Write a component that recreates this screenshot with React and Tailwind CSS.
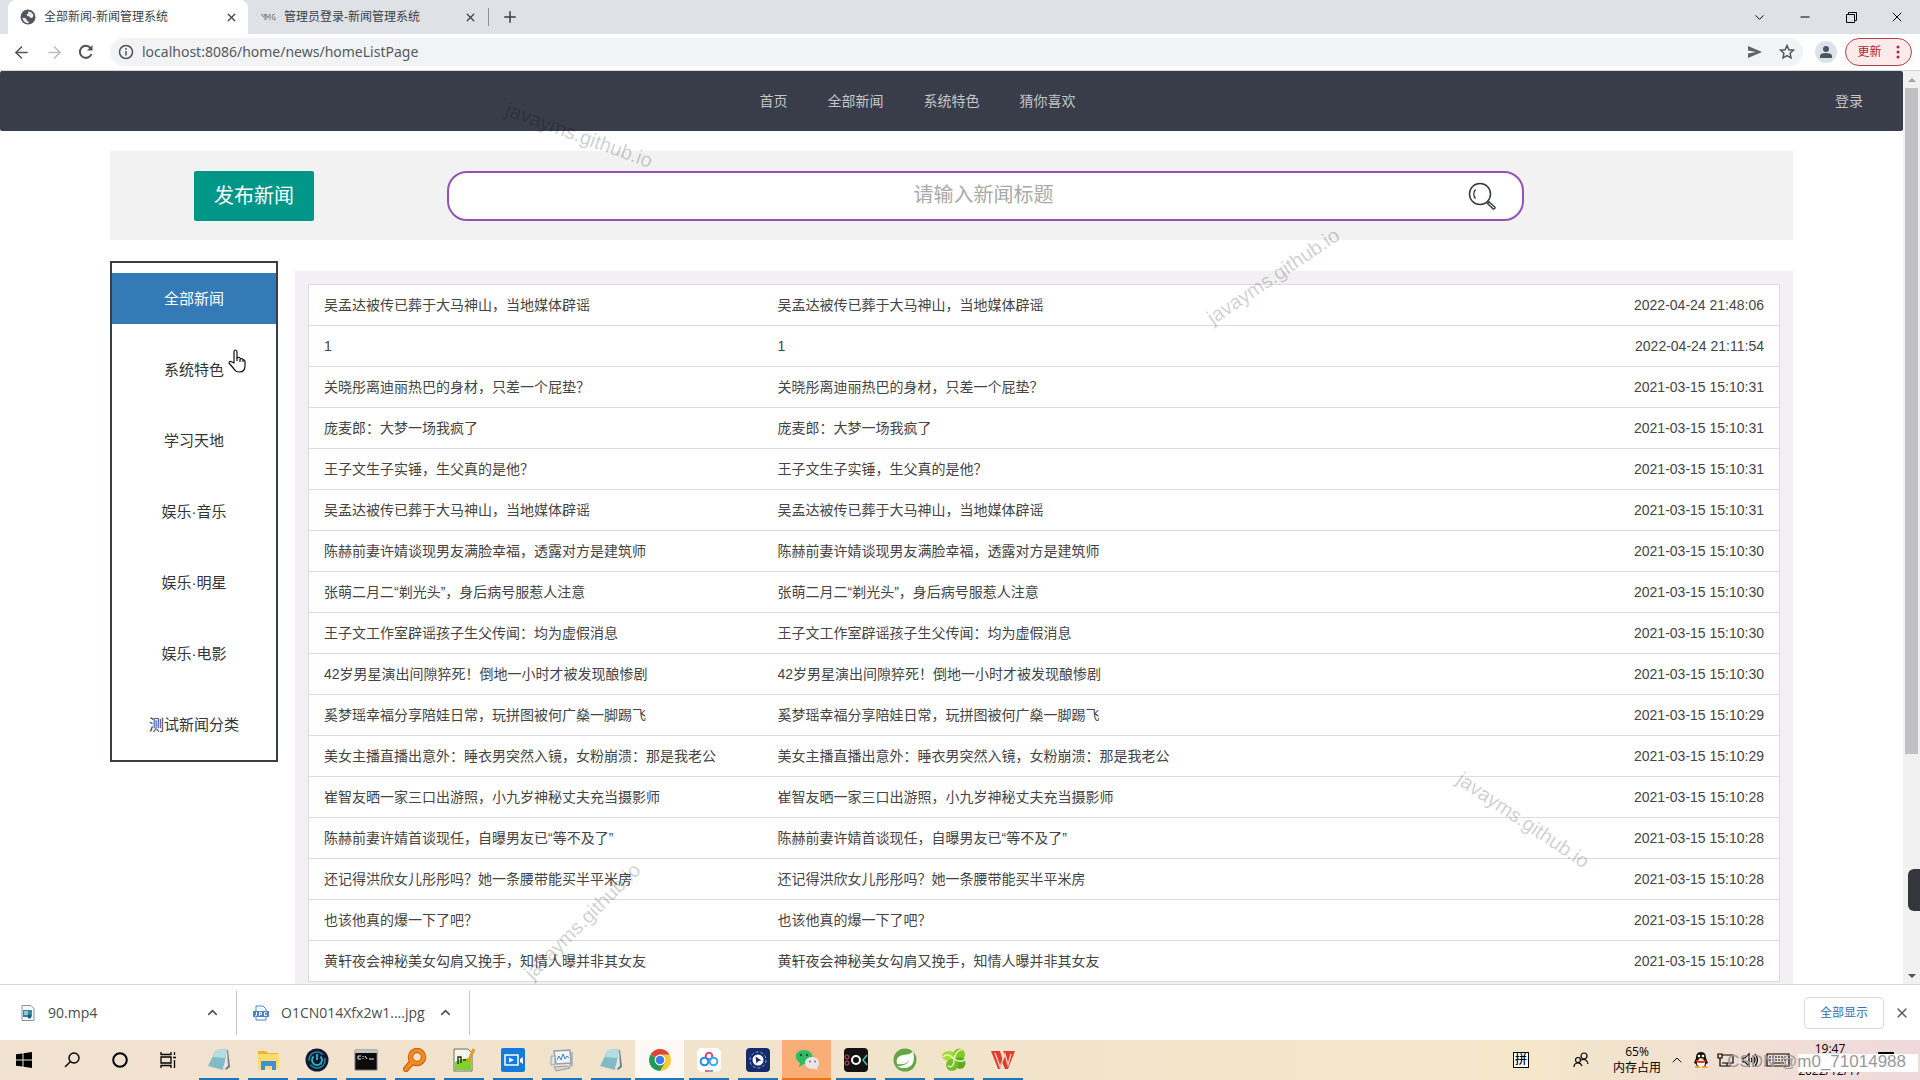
import { ArrowLeft, ArrowRight, ChevronDown, ChevronUp, Minus, Plus, X } from 'lucide-react';

const NEWS = [
  ['吴孟达被传已葬于大马神山，当地媒体辟谣', '2022-04-24 21:48:06'],
  ['1', '2022-04-24 21:11:54'],
  ['关晓彤离迪丽热巴的身材，只差一个屁垫？', '2021-03-15 15:10:31'],
  ['庞麦郎：大梦一场我疯了', '2021-03-15 15:10:31'],
  ['王子文生子实锤，生父真的是他？', '2021-03-15 15:10:31'],
  ['吴孟达被传已葬于大马神山，当地媒体辟谣', '2021-03-15 15:10:31'],
  ['陈赫前妻许婧谈现男友满脸幸福，透露对方是建筑师', '2021-03-15 15:10:30'],
  ['张萌二月二“剃光头”，身后病号服惹人注意', '2021-03-15 15:10:30'],
  ['王子文工作室辟谣孩子生父传闻：均为虚假消息', '2021-03-15 15:10:30'],
  ['42岁男星演出间隙猝死！倒地一小时才被发现酿惨剧', '2021-03-15 15:10:30'],
  ['奚梦瑶幸福分享陪娃日常，玩拼图被何广燊一脚踢飞', '2021-03-15 15:10:29'],
  ['美女主播直播出意外：睡衣男突然入镜，女粉崩溃：那是我老公', '2021-03-15 15:10:29'],
  ['崔智友晒一家三口出游照，小九岁神秘丈夫充当摄影师', '2021-03-15 15:10:28'],
  ['陈赫前妻许婧首谈现任，自曝男友已“等不及了”', '2021-03-15 15:10:28'],
  ['还记得洪欣女儿彤彤吗？她一条腰带能买半平米房', '2021-03-15 15:10:28'],
  ['也该他真的爆一下了吧？', '2021-03-15 15:10:28'],
  ['黄轩夜会神秘美女勾肩又挽手，知情人曝并非其女友', '2021-03-15 15:10:28'],
];

const NAV = ['首页', '全部新闻', '系统特色', '猜你喜欢'];
const CATEGORIES = ['全部新闻', '系统特色', '学习天地', '娱乐·音乐', '娱乐·明星', '娱乐·电影', '测试新闻分类'];

function TabStrip() {
  return (
    <div className="flex h-[34px] shrink-0 items-stretch bg-[#dee1e6] pl-2 text-xs text-[#3c4043]">
      <div className="flex w-60 items-center rounded-t-lg bg-white pr-2.5 pl-3">
        <svg viewBox="0 0 16 16" className="size-4 shrink-0">
          <circle cx="8" cy="8" r="7.5" fill="#50565c" />
          <path d="M2.500 9q3-1 4 1.500T9.500 13q-1 1.500-3 1-3.500-1.500-4-5z" fill="#e8eaed" />
          <path d="M8 2.500q4 0 5.500 4-.5 3-3 2.500-1-2-3-2-1.500-1-.5-2 2 0 1-2.500z" fill="#e8eaed" />
        </svg>
        <span className="ml-2 flex-1">全部新闻-新闻管理系统</span>
        <button aria-label="关闭标签页"><X size={13} strokeWidth={2.4} /></button>
      </div>
      <div className="flex w-60 items-center border-r border-transparent pr-2.5 pl-3">
        <svg viewBox="0 0 16 10" className="h-2.5 w-4 shrink-0" fill="none" stroke="#85898d">
          <path d="M1 3q2-2 2 1t2-2v6M6 8V2l2 4 2-4v6M15 2q-3 0-3 3t3 3v-3h-1.500" />
        </svg>
        <span className="ml-2 flex-1">管理员登录-新闻管理系统</span>
        <button aria-label="关闭标签页"><X size={13} strokeWidth={2.4} /></button>
      </div>
      <div className="my-2 border-l border-[#8d9197]" />
      <button className="ml-3" aria-label="新标签页"><Plus size={18} /></button>
      <div className="ml-auto flex items-center text-black">
        <button className="flex w-[46px] justify-center" aria-label="搜索标签页"><ChevronDown size={15} strokeWidth={1.5} /></button>
        <button className="flex w-[46px] justify-center" aria-label="最小化"><Minus size={14} strokeWidth={1.8} /></button>
        <button className="flex w-[46px] justify-center" aria-label="还原">
          <svg viewBox="0 0 11 11" className="size-[11px]" fill="none" stroke="currentColor">
            <path d="M.5 2.5h8v8h-8zM2.5 2.5v-2h8v8h-2" />
          </svg>
        </button>
        <button className="flex w-[46px] justify-center" aria-label="关闭"><X size={16} strokeWidth={1.5} /></button>
      </div>
    </div>
  );
}

function Toolbar() {
  return (
    <div className="flex h-[37px] shrink-0 items-center border-b border-[#d5d7da] bg-white pr-2 pl-3 text-[#50545a]">
      <button className="mr-3.5" aria-label="后退"><ArrowLeft size={19} /></button>
      <button className="mr-3.5 text-[#b9bcc0]" aria-label="前进"><ArrowRight size={19} /></button>
      <button className="mr-4" aria-label="重新加载">
        <svg viewBox="0 0 16 16" className="size-4" fill="none" stroke="currentColor" strokeWidth="2">
          <path d="M13.500 10A6 6 0 1 1 12.500 4" />
          <path d="M14.500 1v5.500H9z" fill="currentColor" stroke="none" />
        </svg>
      </button>
      <div className="flex h-7 flex-1 items-center rounded-full bg-[#f1f3f4] pr-2 pl-2">
        <svg viewBox="0 0 16 16" className="size-4" fill="none" stroke="currentColor" strokeWidth="1.5">
          <circle cx="8" cy="8" r="6.500" />
          <path d="M8 7v4.500M8 4v1.700" />
        </svg>
        <input
          aria-label="地址"
          className="ml-2 flex-1 bg-transparent font-['Noto_Sans','Noto_Sans_CJK_SC',sans-serif] text-sm text-[#55595e] outline-none"
          defaultValue="localhost:8086/home/news/homeListPage"
        />
        <button className="mr-4" aria-label="分享">
          <svg viewBox="0 0 16 14" className="h-3.5 w-4" fill="#5f6368"><path d="M1 1l14 6-14 6V8.500L9 7 1 5.500z" /></svg>
        </button>
        <button aria-label="收藏">
          <svg viewBox="0 0 16 16" className="size-4" fill="none" stroke="#50545a" strokeWidth="1.500">
            <path d="M8 1.500l1.900 4.200 4.600.5-3.400 3.100.9 4.500L8 11.500l-4 2.300.9-4.500L1.500 6.200l4.600-.5z" />
          </svg>
        </button>
      </div>
      <button className="ml-3 flex size-[22px] items-center justify-center rounded-full bg-[#dde1ea]" aria-label="个人资料">
        <svg viewBox="0 0 14 14" className="size-3.5" fill="#4c5462">
          <circle cx="7" cy="4" r="3" />
          <path d="M1 13v-2q0-3 6-3t6 3v2z" />
        </svg>
      </button>
      <button className="ml-2 flex h-7 w-[67px] items-center justify-center gap-3.5 rounded-full border border-[#b3404a] bg-[#fcebea] text-xs text-[#b3262f]">
        更新
        <svg viewBox="0 0 4 14" className="h-3.5 w-1" fill="#b3262f">
          <circle cx="2" cy="2" r="1.500" /><circle cx="2" cy="7" r="1.500" /><circle cx="2" cy="12" r="1.500" />
        </svg>
      </button>
    </div>
  );
}

function SiteNav() {
  return (
    <nav className="flex h-[60px] items-center rounded-[2px] bg-[#393d49] px-5 text-sm text-[#c3c5c9]">
      <div className="flex flex-1 justify-center">
        {NAV.map(name => <a key={name} href="#" className="px-5">{name}</a>)}
      </div>
      <a href="#" className="px-5">登录</a>
    </nav>
  );
}

function SearchPanel() {
  return (
    <div className="mt-5 flex items-center bg-[#f2f2f2] pt-5 pb-[19px] pl-[84px]">
      <button className="h-[50px] w-[120px] rounded-[2px] bg-[#009688] text-xl text-white">发布新闻</button>
      <div className="mr-[269px] ml-[133px] flex h-[50px] flex-1 items-center rounded-[20px] border-2 border-[#9453b4] bg-white pr-[26px] pl-[50px]">
        <input
          aria-label="新闻标题"
          placeholder="请输入新闻标题"
          className="min-w-0 flex-1 bg-transparent pb-0.5 text-center text-xl outline-none placeholder:text-[#a9a9a9]"
        />
        <button aria-label="搜索">
          <svg viewBox="0 0 28 28" className="size-7" fill="none" stroke="#353940" strokeWidth="1.500">
            <circle cx="12" cy="12" r="10.500" />
            <path d="M7.500 7.500a7 7 0 0 0 0 9M19.500 21.500l1.500-1.700 6 5.500q.2 1.700-1.700 1.700z" />
          </svg>
        </button>
      </div>
    </div>
  );
}

function Sidebar() {
  return (
    <aside className="flex w-[168px] shrink-0 flex-col gap-5 border-2 border-[#3a3d45] pt-2.5 pb-2.5 text-[15px] text-[#333]">
      {CATEGORIES.map((name, i) => (
        <a
          key={name}
          href="#"
          className={`flex h-[51px] items-center justify-center pt-0.5 ${i === 0 ? 'bg-[#337ab7] text-white' : ''}`}
        >
          {name}
        </a>
      ))}
    </aside>
  );
}

function NewsTable() {
  return (
    <div className="mt-2.5 flex-1 bg-[#f2f0f2] p-[13px]">
      <table className="w-full border-collapse border border-[#dcdcdf] bg-white text-sm text-[#444]">
        <tbody>
          {NEWS.map(([title, time], i) => (
            <tr key={i} className="h-[41px] border-b border-[#dcdcdf]">
              <td className="w-[454px] px-[15px]">{title}</td>
              <td className="px-[15px]">{title}</td>
              <td className="px-[15px] text-right">{time}</td>
            </tr>
          ))}
        </tbody>
      </table>
    </div>
  );
}

function Scrollbar() {
  return (
    <div className="flex w-[17px] shrink-0 flex-col items-center justify-between bg-[#f1f1f2]">
      <svg viewBox="0 0 17 17" className="size-[17px]"><path d="M5 11h8L9 7z" fill="#a3a3a3" /></svg>
      <div className="mb-auto h-[73%] w-[13px] bg-[#c1c1c3]" />
      <svg viewBox="0 0 17 17" className="size-[17px]"><path d="M5 7h8l-4 4z" fill="#505050" /></svg>
    </div>
  );
}

function Downloads() {
  return (
    <div className="flex h-14 shrink-0 items-center border-t border-[#d5d7da] bg-white pr-2.5 font-['Open_Sans','Noto_Sans_CJK_SC',sans-serif] text-sm text-[#4a4d51]">
      <div className="flex h-11 w-[237px] items-center border-r border-[#c5c7ca] pr-4 pl-5">
        <svg viewBox="0 0 16 16" className="size-4">
          <path d="M2 .5h9l3 3v12H2z" fill="#f4f8fa" stroke="#8b9298" />
          <path d="M3 5h7v7H3z" fill="#2c87a8" />
          <path d="M4 7h4M4 9h4" stroke="#fff" />
          <path d="M11 5v6" stroke="#155e80" strokeWidth="1.500" />
          <circle cx="9.500" cy="11.500" r="2" fill="#155e80" />
        </svg>
        <span className="ml-3 flex-1">90.mp4</span>
        <button aria-label="90.mp4 选项"><ChevronUp size={15} strokeWidth={2.4} /></button>
      </div>
      <div className="flex h-11 w-[233px] items-center border-r border-[#c5c7ca] pr-4 pl-4">
        <svg viewBox="0 0 16 16" className="size-4">
          <path d="M3 6V1h7l3 3v2M3 12v3h10v-3" fill="#fff" stroke="#4f82c9" />
          <path d="M0 6h16v6H0z" fill="#4f82c9" />
          <path d="M3.500 7v3q0 1-1.500 1M6.500 11V7.500h2v2h-2M13.500 7.500h-2v3h2V9.500" stroke="#fff" fill="none" />
        </svg>
        <span className="ml-3 flex-1">O1CN014Xfx2w1....jpg</span>
        <button aria-label="jpg 选项"><ChevronUp size={15} strokeWidth={2.4} /></button>
      </div>
      <button className="ml-auto h-8 w-20 rounded border border-[#d7d9dc] text-xs text-[#3271b5]">全部显示</button>
      <button className="ml-2.5 text-[#55585c]" aria-label="关闭下载栏"><X size={16} /></button>
    </div>
  );
}

function Notepad() {
  return (
    <>
      <path d="M9 2h12l2 17-4 3z" fill="#6f7b80" />
      <path d="M9 2l11-1-4 21-15-4z" fill="#7fbcc8" />
      <path d="M9 2l11-1-2 9-12-1z" fill="#b5dde2" />
      <path d="M16 22l4-21 1 17z" fill="#e4e7e5" />
    </>
  );
}

const APPS = [
  { name: '记事本', art: <Notepad /> },
  {
    name: '文件资源管理器',
    art: (
      <>
        <path d="M2 3h8l2 2h10v15H2z" fill="#eab530" />
        <path d="M2 6h21v15H2z" fill="#ffdb6d" />
        <path d="M5 22v-9h15v9h-4v-4H9v4z" fill="#3f8fd6" />
      </>
    ),
  },
  {
    name: '安全中心',
    art: (
      <>
        <circle cx="12" cy="12" r="11.500" fill="#10192f" />
        <circle cx="12" cy="12" r="8" fill="none" stroke="#1b8ba3" strokeWidth="1.500" strokeDasharray="20 4" />
        <path d="M12 6v6M8.500 8.500a5 5 0 1 0 7 0" fill="none" stroke="#28b9cc" strokeWidth="1.800" />
      </>
    ),
  },
  {
    name: '命令提示符',
    art: (
      <>
        <path d="M1 2h22v20H1z" fill="#0b0b0b" stroke="#777" />
        <path d="M1 2h22v3H1z" fill="#bfc3c6" />
        <path d="M7 8H4v3h3M9 8v1M9 10v1M11 8l2 3M15 11h5" stroke="#eee" fill="none" />
      </>
    ),
  },
  {
    name: '搜索工具',
    art: (
      <>
        <circle cx="14" cy="9" r="6.500" fill="none" stroke="#c55e0c" strokeWidth="5.500" />
        <path d="M9 14l-6 7" stroke="#c55e0c" strokeWidth="6" strokeLinecap="round" />
        <circle cx="14" cy="9" r="6.500" fill="none" stroke="#f68a1f" strokeWidth="3.500" />
        <path d="M9 14l-6 7" stroke="#f68a1f" strokeWidth="4" strokeLinecap="round" />
      </>
    ),
  },
  {
    name: 'Notepad++',
    art: (
      <>
        <path d="M2 1h14l4 4v18H2z" fill="#f4f6ee" stroke="#66705c" />
        <path d="M3 14q8-5 16-3v11H3z" fill="#7fd12e" />
        <path d="M6 16V9h3v6M11 12h3M15 12h3" stroke="#26351f" strokeWidth="1.500" fill="none" />
        <path d="M22 1l-6 13" stroke="#dd9e2a" strokeWidth="3" />
      </>
    ),
  },
  {
    name: '录屏',
    art: (
      <>
        <rect x="0" y="0" width="24" height="24" rx="2" fill="#147bdc" />
        <path d="M4 7h13v10H4z" fill="none" stroke="#fff" strokeWidth="1.500" />
        <path d="M8 9.500l5 2.500-5 2.500z" fill="#fff" />
        <path d="M19 11l3-2v7l-3-2z" fill="#fff" />
      </>
    ),
  },
  {
    name: '资源监视器',
    art: (
      <>
        <path d="M20 4h3v14l-4 2z" fill="#b4b8ba" />
        <path d="M4 3l16-1 1 13-15 1z" fill="#edf3f7" stroke="#98a0a6" strokeWidth="1.500" />
        <path d="M7 12l2-4 2 4 2-6 2 5 2-3 2 2" fill="none" stroke="#3b86b9" />
        <path d="M1 8h4v9H1z" fill="#dfe2e3" stroke="#a2a5a8" />
        <path d="M4 19l13-1 3 2-14 3z" fill="#d4d6d7" stroke="#979a9c" />
      </>
    ),
  },
  { name: '记事本', art: <Notepad /> },
  {
    name: 'Chrome',
    active: true,
    art: (
      <>
        <path d="M12 12L2.500 6.500A11 11 0 0 1 21.500 6.500z" fill="#dc4437" />
        <path d="M12 12V6.500h9.500A11 11 0 0 1 12 23z" fill="#fcc934" />
        <path d="M12 12l4.800 2.700L12 23A11 11 0 0 1 2.500 6.500z" fill="#1e9c55" />
        <circle cx="12" cy="12" r="5.400" fill="#fff" />
        <circle cx="12" cy="12" r="4.300" fill="#3f7ce8" />
      </>
    ),
  },
  {
    name: '百度网盘',
    art: (
      <>
        <rect width="24" height="24" rx="5" fill="#fff" />
        <circle cx="12" cy="8" r="3.300" fill="none" stroke="#e7485d" strokeWidth="2" />
        <circle cx="7.500" cy="13.500" r="3.800" fill="none" stroke="#248af0" strokeWidth="2" />
        <circle cx="16.500" cy="13.500" r="3.800" fill="none" stroke="#39aaf3" strokeWidth="2" />
        <path d="M8 23h4" stroke="#e34" strokeWidth="1.500" /><path d="M12 23h4" stroke="#38e" strokeWidth="1.500" />
      </>
    ),
  },
  {
    name: '播放器',
    art: (
      <>
        <rect width="24" height="24" rx="4" fill="#142c6d" />
        <circle cx="12" cy="12" r="8" fill="none" stroke="#8ca4d8" strokeDasharray="3 2" />
        <circle cx="12" cy="12" r="5.500" fill="#fff" />
        <path d="M9.500 8.500l6 4-3 .5-2 2.500z" fill="#142c6d" />
      </>
    ),
  },
  {
    name: '微信',
    alert: true,
    art: (
      <>
        <path d="M9 2c5 0 8.500 3 8.500 7S14 16 9 16l-5 3 1-4C-2 11 0 2 9 2z" fill="#2ebd62" />
        <path d="M17 9c4 0 7 2.500 7 6 0 2-1 3.500-2 4.500v2.500l-3-1.500c-5 1-9-1.500-9-5.500 0-3.500 3-6 7-6z" fill="#e8e8e6" />
        <circle cx="6" cy="7" r="1.200" fill="#185c33" /><circle cx="12" cy="7" r="1.200" fill="#185c33" />
        <circle cx="15" cy="13.500" r="1" fill="#777" /><circle cx="20" cy="13.500" r="1" fill="#777" />
      </>
    ),
  },
  {
    name: '剪辑',
    art: (
      <>
        <rect width="24" height="24" rx="4" fill="#121212" />
        <circle cx="12" cy="12" r="4" fill="none" stroke="#fff" strokeWidth="2" />
        <circle cx="3" cy="9" r="2" fill="none" stroke="#e84966" /><circle cx="3" cy="15" r="2" fill="none" stroke="#e84966" />
        <path d="M23 7l-4 5 4 5" fill="none" stroke="#42c7b6" strokeWidth="1.500" />
      </>
    ),
  },
  {
    name: 'Spring',
    art: (
      <>
        <circle cx="12" cy="12" r="11.500" fill="#63a744" />
        <path d="M20 3c2 8 1 16-7 17-4 .5-7-.5-9-2 6 .5 11-2 13-7-3 5-8 6-13 5C2 8 9 7 14 6.500 17 6 19 5 20 3z" fill="#fff" />
      </>
    ),
  },
  {
    name: '下载助手',
    art: (
      <>
        <ellipse cx="7" cy="8" rx="7" ry="5" fill="#a9dc38" />
        <ellipse cx="17" cy="7" rx="6" ry="6.500" fill="#81ca27" />
        <ellipse cx="18" cy="15" rx="5.500" ry="6" fill="#5cae20" />
        <ellipse cx="10" cy="17" rx="6" ry="6" fill="#74be2b" />
        <path d="M1 9q5-5 11 2Q14 2 20 2M6 18q6 3 6-7 5 4 11 1" fill="none" stroke="#e5f6b8" strokeWidth="1.500" />
      </>
    ),
  },
  {
    name: 'WPS',
    art: (
      <>
        <path d="M0 3h9l3 10 2-5-2-5h12l-7 18h-3l-3-7-2 7H7z" fill="#e23b2d" />
        <path d="M4 5l5 14 5-13 3 11 3-11" fill="none" stroke="#f7d3c6" strokeWidth="1.300" />
      </>
    ),
  },
];

function Taskbar() {
  return (
    <div className="flex h-10 shrink-0 items-stretch bg-linear-to-r from-[#f1e1cf] from-0% via-[#f3e6c9] via-80% to-[#efd9dc] to-100% text-black">
      <button className="flex w-12 items-center justify-center" aria-label="开始">
        <svg viewBox="0 0 16 16" className="size-4"><path d="M0 2.300L6.500 1.400v6.100H0zM7.500 1.200L16 0v7.500H7.500zM0 8.500h6.500v6.100L0 13.700zM7.500 8.500H16V16l-8.500-1.200z" /></svg>
      </button>
      <button className="flex w-12 items-center justify-center" aria-label="搜索">
        <svg viewBox="0 0 16 16" className="size-4" fill="none" stroke="currentColor" strokeWidth="1.400"><circle cx="10" cy="6" r="5" /><path d="M6.500 9.500L1 15" /></svg>
      </button>
      <button className="flex w-12 items-center justify-center" aria-label="Cortana">
        <svg viewBox="0 0 16 16" className="size-4" fill="none" stroke="currentColor" strokeWidth="2"><circle cx="8" cy="8" r="6.800" /></svg>
      </button>
      <button className="mr-0.5 flex w-12 items-center justify-center" aria-label="任务视图">
        <svg viewBox="0 0 17 16" className="h-4 w-[17px]" fill="none" stroke="currentColor" strokeWidth="1.300">
          <path d="M1 0v2.500h10V0M1 5h10v6H1zM1 16v-2.500h10V16M14.500 0v3M14.500 8v8M13 5.500h3" />
        </svg>
      </button>
      {APPS.map((app, i) => (
        <button
          key={i}
          aria-label={app.name}
          className={`flex w-[49px] flex-col items-center justify-between pt-2 ${app.active ? 'bg-[#fdf8f4]' : app.alert ? 'bg-[#f9ad77]' : ''}`}
        >
          <svg viewBox="0 0 24 24" className="size-6">{app.art}</svg>
          <span className={`h-0.5 ${app.active ? 'w-full bg-[#1b76bd]' : app.alert ? 'w-full bg-[#f2700f]' : 'w-10 bg-[#1b76bd]'}`} />
        </button>
      ))}
      <div className="ml-auto flex items-center pr-[26px] font-['Open_Sans','Noto_Sans_CJK_SC',sans-serif] text-xs">
        <span className="mr-11 flex size-4 items-center justify-center border border-black bg-white font-medium">拼</span>
        <svg viewBox="0 0 16 16" className="mr-6 size-4" fill="none" stroke="currentColor" strokeWidth="1.200">
          <circle cx="5" cy="8" r="2.500" /><circle cx="11" cy="4" r="3" /><path d="M1 15q0-4 4-4 3 0 4 3M8 8q6-2 7 4" />
        </svg>
        <div className="mr-2 text-center leading-4">65%<br />内存占用</div>
        <ChevronUp size={16} strokeWidth={1.5} />
        <svg viewBox="0 0 16 16" className="ml-2 size-4">
          <path d="M8 0c4 0 5 3 5 6l2 5-2 1-1 3H4l-1-3-2-1 2-5c0-3 1-6 5-6z" fill="#111" />
          <ellipse cx="8" cy="11" rx="4" ry="4" fill="#fff" /><circle cx="6" cy="4" r="1.300" fill="#fff" /><circle cx="10" cy="4" r="1.300" fill="#fff" />
          <path d="M3 8q5 2 10 0v2q-5 2-10 0z" fill="#e2231a" /><path d="M5 6h6l-3 1.500zM2 14h5v2H2zM9 14h5v2H9z" fill="#f4a51c" />
        </svg>
        <svg viewBox="0 0 17 16" className="ml-2 h-4 w-[17px]" fill="none" stroke="currentColor" strokeWidth="1.200"><path d="M5 3h11v8H5M1 2h4v4H1zM3 6v8h4M10 11v3M7 14h7" /></svg>
        <svg viewBox="0 0 16 16" className="ml-2 size-4" fill="none" stroke="currentColor" strokeWidth="1.200"><path d="M1 6h2l4-4v12l-4-4H1zM9 6q2 2 0 4M11 4q4 4 0 8M13 2q5 6 0 12" /></svg>
        <svg viewBox="0 0 24 16" className="ml-2 h-4 w-6" fill="none" stroke="currentColor" strokeWidth="1.200"><path d="M1 2h22v12H1zM6 11h12" /><path d="M3 5h18M3 8h18" strokeDasharray="2 1" /></svg>
        <div className="ml-2 w-16 text-center leading-[22px]">19:47<br />2022/12/17</div>
        <svg viewBox="0 0 16 24" className="ml-4 h-6 w-4" fill="none" stroke="currentColor" strokeWidth="1.200"><path d="M1 5h14v11H9l-3 3v-3H1z" /><path d="M0 5h16" strokeWidth="2" /></svg>
      </div>
    </div>
  );
}

function Watermarks() {
  return (
    <div className="pointer-events-none absolute inset-0 overflow-hidden text-xl text-black/20">
      <span className="absolute top-[121px] left-[502px] rotate-[20deg]">javayms.github.io</span>
      <span className="absolute top-[262px] left-[1196px] -rotate-[34deg]">javayms.github.io</span>
      <span className="absolute top-[806px] left-[1446px] rotate-[34deg]">javayms.github.io</span>
      <span className="absolute top-[907px] left-[505px] -rotate-[45deg]">javayms.github.io</span>
      <div className="absolute right-0.5 bottom-2 h-[18px] w-[120px] bg-white" />
      <span className="absolute right-3.5 bottom-1.5 text-[17px] leading-6 text-[#98989b]">CSDN @m0_71014988</span>
    </div>
  );
}

export default function App() {
  return (
    <div className="relative flex h-screen flex-col overflow-hidden bg-white font-['Liberation_Sans','Noto_Sans_CJK_SC',sans-serif]">
      <TabStrip />
      <Toolbar />
      <div className="flex min-h-0 flex-1">
        <main className="min-w-0 flex-1 overflow-hidden">
          <SiteNav />
          <div className="px-[110px]">
            <SearchPanel />
            <div className="mt-[21px] flex items-start gap-[17px]">
              <Sidebar />
              <NewsTable />
            </div>
          </div>
        </main>
        <Scrollbar />
      </div>
      <Downloads />
      <Taskbar />
      <Watermarks />
      {/* collapsed side panel handle */}
      <div className="absolute top-[869px] right-0 h-[42px] w-3 rounded-l-md bg-[#35373d]" />
      <svg viewBox="0 0 18 24" className="absolute top-[349px] left-[228px] h-6 w-[18px]" fill="#fff" stroke="#111" strokeWidth="1.200" strokeLinejoin="round">
        <path d="M6 14V3q0-2 1.500-2T9 3v6q3-1.500 3.500 1Q15 9 15 11q2-.5 2 1.500V17q0 6-6 6-3 0-5-3l-5-6q0-2 2-1.500z" />
        <path d="M9 9v3M12 10v3M15 11v2" />
      </svg>
    </div>
  );
}
